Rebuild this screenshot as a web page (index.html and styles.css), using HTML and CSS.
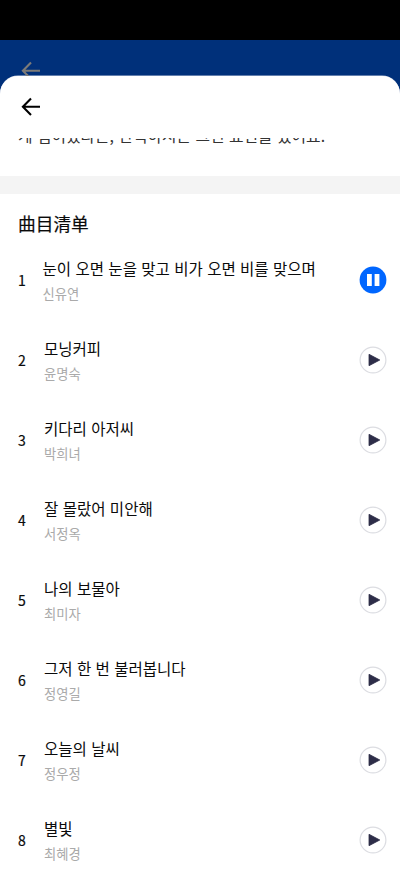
FILE: index.html
```html
<!DOCTYPE html>
<html lang="ko">
<head>
<meta charset="utf-8">
<meta name="viewport" content="width=device-width, initial-scale=1">
<title>曲目清单</title>
<link rel="stylesheet" href="styles.css">
</head>
<body>
<svg class="defs" width="0" height="0" aria-hidden="true">
  <symbol id="back" viewBox="0 0 20 20"><path d="M19 9.700H2.200M10 1.500L1.900 9.700l8.100 8.200" fill="none" stroke="currentColor" stroke-width="2.100"/></symbol>
  <symbol id="play" viewBox="0 0 28 28"><circle cx="14" cy="14" r="12.900" fill="#fff" stroke="#dcdde2" stroke-width="1.200"/><path d="M10 8.300v11.400L20.800 14z" fill="#2d2d48" stroke="#2d2d48" stroke-width=".8" stroke-linejoin="round"/></symbol>
  <symbol id="pause" viewBox="0 0 28 28"><circle cx="14" cy="14" r="13.400" fill="#0066ff"/><path d="M8 8h4.800v12H8zM15.600 8h4.800v12h-4.800z" fill="#fff"/></symbol>
</svg>
<div class="status"></div>
<div class="backdrop"><svg class="back"><use href="#back"/></svg></div>
<main class="sheet">
  <header class="bar"><svg class="back"><use href="#back"/></svg></header>
  <div class="intro"><p>게 힘이었다는, 간직하시는 그런 표현을 썼어요.</p></div>
  <div class="divider"></div>
  <h1 lang="zh-CN">曲目清单</h1>
  <ol class="tracks">
    <li class="current"><span class="num">1</span><div class="info"><b>눈이 오면 눈을 맞고 비가 오면 비를 맞으며</b><span>신유연</span></div><svg class="control"><use href="#pause"/></svg></li>
    <li><span class="num">2</span><div class="info"><b>모닝커피</b><span>윤명숙</span></div><svg class="control"><use href="#play"/></svg></li>
    <li><span class="num">3</span><div class="info"><b>키다리 아저씨</b><span>박희녀</span></div><svg class="control"><use href="#play"/></svg></li>
    <li><span class="num">4</span><div class="info"><b>잘 몰랐어 미안해</b><span>서정옥</span></div><svg class="control"><use href="#play"/></svg></li>
    <li><span class="num">5</span><div class="info"><b>나의 보물아</b><span>최미자</span></div><svg class="control"><use href="#play"/></svg></li>
    <li><span class="num">6</span><div class="info"><b>그저 한 번 불러봅니다</b><span>정영길</span></div><svg class="control"><use href="#play"/></svg></li>
    <li><span class="num">7</span><div class="info"><b>오늘의 날씨</b><span>정우정</span></div><svg class="control"><use href="#play"/></svg></li>
    <li><span class="num">8</span><div class="info"><b>별빛</b><span>최혜경</span></div><svg class="control"><use href="#play"/></svg></li>
  </ol>
</main>
</body>
</html>
```
FILE: styles.css
```css
* { box-sizing: border-box; margin: 0; padding: 0; }
body {
  height: 889px;
  overflow: hidden;
  background: #00307a;
  color: #0a0a0a;
  font-family: "Noto Sans CJK KR", sans-serif;
}
.defs { position: absolute; }
.status { height: 40px; background: #000; }
.backdrop { height: 36px; padding: 21px 0 0 21px; color: #7d7b78; overflow: hidden; }
.back { display: block; width: 20px; height: 20px; }
.sheet {
  height: 813px;
  background: #fff;
  border-radius: 18px 18px 0 0;
  box-shadow: 0 -.5px 0 #c5cee0;
  overflow: hidden;
}
.bar { height: 62px; padding: 21px 0 0 21px; color: #000; }
.intro {
  height: 38px;
  overflow: hidden;
  padding-left: 18px;
  display: flex;
  align-items: flex-start;
}
.intro p {
  margin-top: -14px;
  font-size: 15.800px;
  line-height: 24px;
  color: #333;
  white-space: nowrap;
}
.divider { height: 18px; background: #f4f4f4; }
h1 {
  margin-top: 16px;
  padding-left: 18px;
  font-family: "Noto Sans CJK SC", sans-serif;
  font-size: 17.7px;
  font-weight: 400;
  -webkit-text-stroke: .2px #0a0a0a;
  line-height: 26px;
}
.tracks { list-style: none; margin-top: 4px; }
.tracks li {
  display: flex;
  align-items: center;
  height: 80px;
  padding: 0 13px 0 18px;
}
.num {
  width: 26px;
  font-size: 14px;
  font-weight: 400;
  -webkit-text-stroke: .2px #0a0a0a;
  line-height: 20px;
  padding-bottom: 1px;
}
.current .num { width: 24.500px; }
.info { flex: 1; white-space: nowrap; padding-top: 1px; }
.info b { display: block; font-size: 15.540px; font-weight: 400; line-height: 26px; }
.info span { display: block; font-size: 13.300px; font-weight: 400; line-height: 26px; color: #aaa; }
.control { width: 28px; height: 28px; flex: none; }
```
